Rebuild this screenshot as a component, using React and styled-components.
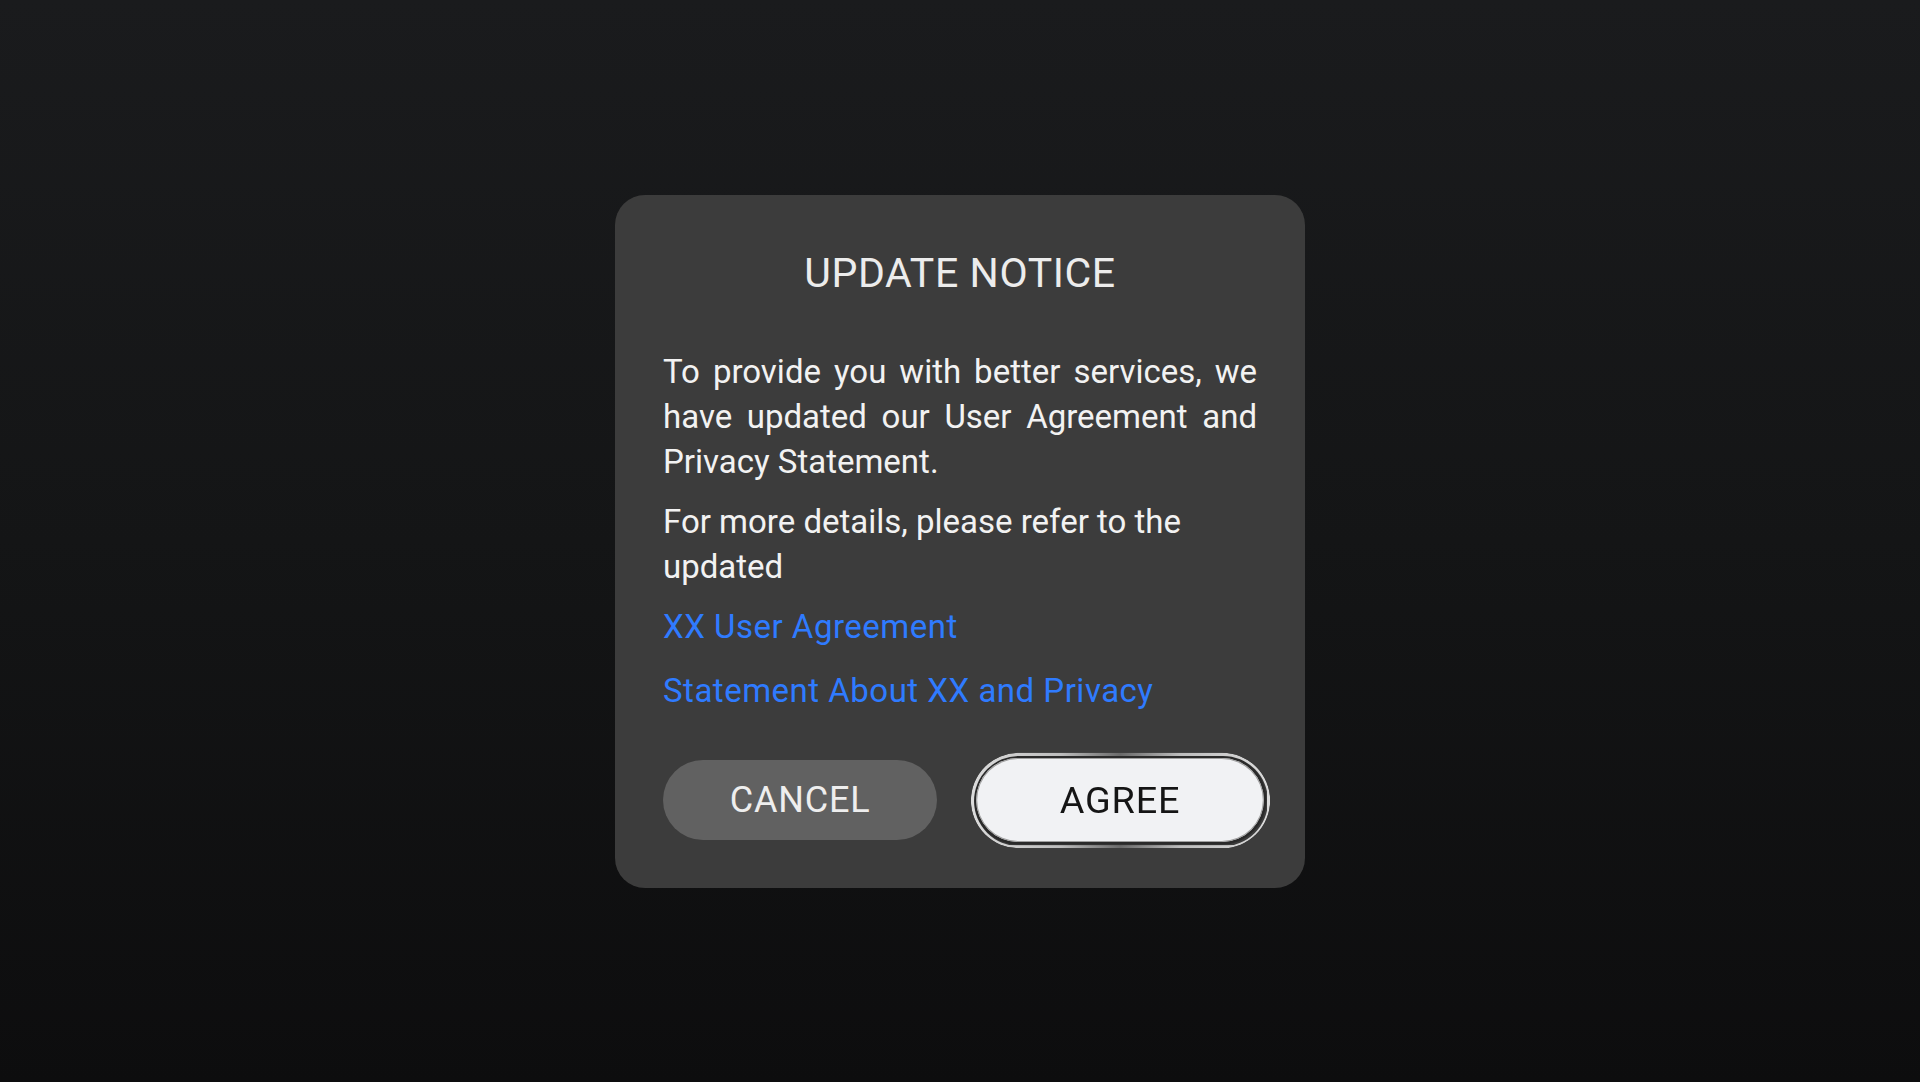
import styled, { createGlobalStyle } from 'styled-components'

const GlobalStyle = createGlobalStyle`
    html, body {
        margin: 0;
        padding: 0;
    }
    body {
        background: linear-gradient(180deg, #1a1b1d 0%, #141516 50%, #0d0d0e 100%);
        font-family: Roboto, "Noto Sans", sans-serif;
        -webkit-font-smoothing: antialiased;
    }
`

const Page = styled.div`
    height: 1082px;
    display: flex;
    align-items: center;
    justify-content: center;
`

const Dialog = styled.div`
    width: 690px;
    box-sizing: border-box;
    padding: 50px 48px 48px;
    background: #3c3c3c;
    border-radius: 30px;
    display: flex;
    flex-direction: column;
`

const Title = styled.div`
    font-size: 41px;
    line-height: 56px;
    letter-spacing: 0.6px;
    color: #ececec;
    text-align: center;
    margin-bottom: 48px;
`

const Paragraph = styled.p`
    margin: 0 0 ${p => p.$gap || 0}px;
    font-size: 33px;
    line-height: 45px;
    color: #f2f2f2;
    text-align: ${p => (p.$justify ? 'justify' : 'left')};
`

const Link = styled.a`
    display: block;
    font-size: 33px;
    line-height: 45px;
    letter-spacing: 0.5px;
    color: #2f7bff;
    text-decoration: none;
    margin-top: ${p => p.$gap}px;
    cursor: pointer;
`

const Buttons = styled.div`
    display: grid;
    grid-template-columns: 1fr 1fr;
    gap: 46px;
    margin-top: 47px;
`

const Button = styled.button`
    position: relative;
    height: 80px;
    border: none;
    border-radius: 40px;
    font-family: inherit;
    font-size: 36px;
    letter-spacing: 0.8px;
    cursor: pointer;
    background: ${p => (p.$primary ? '#f1f2f4' : '#616161')};
    color: ${p => (p.$primary ? '#151515' : '#eeeeee')};
    transform: ${p => (p.$primary ? 'scale(1.05)' : 'none')};
    box-shadow: ${p => (p.$primary ? 'inset 0 0 0 1px #a0a0a0, 0 0 0 2.5px #2a2a2a' : 'none')};

    &::before {
        content: '';
        display: ${p => (p.$primary ? 'block' : 'none')};
        position: absolute;
        inset: -5.5px;
        border-radius: 46px;
        padding: 2.5px;
        background: linear-gradient(90deg, #dcdcdc 0%, #bdbdbd 30%, #6a6a6a 50%, #bdbdbd 70%, #dcdcdc 100%);
        -webkit-mask: linear-gradient(#000 0 0) content-box, linear-gradient(#000 0 0);
        -webkit-mask-composite: xor;
        mask-composite: exclude;
    }
`

export default function App() {
    return (
        <>
            <GlobalStyle />
            <Page>
                <Dialog>
                    <Title>UPDATE NOTICE</Title>
                    <Paragraph $justify $gap={15}>
                        To provide you with better services, we have updated our User Agreement and Privacy Statement.
                    </Paragraph>
                    <Paragraph>For more details, please refer to the updated</Paragraph>
                    <Link $gap={15}>XX User Agreement</Link>
                    <Link $gap={19}>Statement About XX and Privacy</Link>
                    <Buttons>
                        <Button>CANCEL</Button>
                        <Button $primary>AGREE</Button>
                    </Buttons>
                </Dialog>
            </Page>
        </>
    )
}
